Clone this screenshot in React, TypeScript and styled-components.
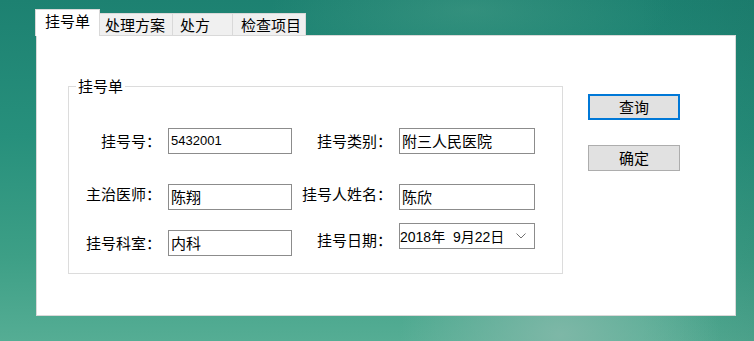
import styled, { createGlobalStyle } from "styled-components";

const GlobalStyle = createGlobalStyle`
  html, body {
    margin: 0;
    padding: 0;
  }
  body {
    font-family: "Noto Sans CJK SC", "Liberation Sans", sans-serif;
    color: #000;
    overflow: hidden;
  }
`;

const Desktop = styled.div`
  width: 754px;
  height: 341px;
  box-sizing: border-box;
  padding: 9px 0 0 35px;
  background:
    radial-gradient(ellipse 160px 110px at 560px 335px, rgba(128, 184, 168, 0.95), rgba(128, 184, 168, 0)),
    radial-gradient(ellipse 200px 60px at 470px 10px, rgba(100, 175, 150, 0.3), transparent),
    linear-gradient(90deg, rgba(0, 0, 0, 0) 85%, rgba(20, 90, 80, 0.15) 100%),
    linear-gradient(180deg, #1d8171 0%, #27907c 40%, #3d9f86 75%, #55ad94 100%);
`;

const TabStrip = styled.div`
  display: flex;
  align-items: flex-end;
  height: 27px;
  margin-bottom: -1px;
  position: relative;
  z-index: 1;
`;

const Tab = styled.div<{ $active?: boolean; $w: number; $pad: number }>`
  box-sizing: border-box;
  width: ${(p) => p.$w}px;
  height: ${(p) => (p.$active ? 27 : 23)}px;
  margin-left: ${(p) => (p.$active ? 0 : -1)}px;
  padding-left: ${(p) => p.$pad}px;
  border: 1px solid #d9d9d9;
  border-bottom: ${(p) => (p.$active ? "none" : "1px solid #d9d9d9")};
  background: ${(p) => (p.$active ? "#fff" : "#f0f0f0")};
  font-size: 15px;
  line-height: 22px;
  white-space: nowrap;
  &:first-child {
    margin-left: 0;
  }
`;

const Page = styled.div`
  box-sizing: border-box;
  margin-left: 1px;
  width: 700px;
  height: 281px;
  border: 1px solid #d9d9d9;
  background: #fff;
  display: flex;
  align-items: flex-start;
  gap: 25px;
  padding: 50px 0 0 31px;
`;

const Group = styled.div`
  position: relative;
  box-sizing: border-box;
  width: 495px;
  height: 188px;
  border: 1px solid #dcdcdc;
  padding-top: 41px;
`;

const Legend = styled.span`
  position: absolute;
  left: 7px;
  top: -11px;
  padding: 0 2px;
  background: #fff;
  font-size: 15px;
  line-height: 20px;
`;

const FormRow = styled.div<{ $h: number; $top: number }>`
  display: grid;
  grid-template-columns: 92px 124px 93px 136px;
  column-gap: 7px;
  height: ${(p) => p.$h}px;
  margin-top: ${(p) => p.$top}px;
  align-items: center;
`;

const Label = styled.div<{ $align?: "start" | "center" | "end" }>`
  justify-self: end;
  align-self: ${(p) => p.$align ?? "center"};
  font-size: 15px;
  line-height: ${(p) => (p.$align === "end" ? 26 : 20)}px;
  white-space: nowrap;
`;

const Field = styled.input<{ $small?: boolean; $align?: "start" | "center" | "end" }>`
  box-sizing: border-box;
  width: 100%;
  height: 26px;
  margin: 0;
  align-self: ${(p) => p.$align ?? "center"};
  border: 1px solid #8c8c8c;
  padding: 0 2px 1px;
  outline: none;
  background: #fff;
  color: #000;
  font-family: "Liberation Sans", "Noto Sans CJK SC", sans-serif;
  font-size: ${(p) => (p.$small ? 13 : 15)}px;
`;

const DateBox = styled.div`
  box-sizing: border-box;
  height: 26px;
  align-self: start;
  border: 1px solid #8c8c8c;
  display: flex;
  align-items: center;
  justify-content: space-between;
  padding: 0 8px 1px 0;
  font-family: "Liberation Sans", "Noto Sans CJK SC", sans-serif;
  font-size: 14px;
  white-space: pre;
`;

const ButtonColumn = styled.div`
  display: flex;
  flex-direction: column;
  gap: 25px;
  margin-top: 8px;
`;

const Button = styled.button<{ $primary?: boolean }>`
  box-sizing: border-box;
  width: 92px;
  height: 26px;
  margin: 0;
  padding: 0;
  background: #e1e1e1;
  border: ${(p) => (p.$primary ? "2px solid #0078d7" : "1px solid #adadad")};
  font-family: "Noto Sans CJK SC", sans-serif;
  font-size: 15px;
  color: #000;
  line-height: 20px;
`;

const tabs = [
  { label: "挂号单", w: 65, pad: 9, active: true },
  { label: "处理方案", w: 74, pad: 5 },
  { label: "处方", w: 61, pad: 7 },
  { label: "检查项目", w: 74, pad: 8 },
];

function Chevron() {
  return (
    <svg width="10" height="6" viewBox="0 0 10 6">
      <path d="M0.5 0.5 L5 5 L9.5 0.5" fill="none" stroke="#707070" strokeWidth="1" />
    </svg>
  );
}

export default function App() {
  return (
    <>
      <GlobalStyle />
      <Desktop>
        <TabStrip>
          {tabs.map((t) => (
            <Tab key={t.label} $active={t.active} $w={t.w} $pad={t.pad}>
              {t.label}
            </Tab>
          ))}
        </TabStrip>
        <Page>
          <Group>
            <Legend>挂号单</Legend>
            <FormRow $h={26} $top={0}>
              <Label>挂号号：</Label>
              <Field $small readOnly value="5432001" />
              <Label>挂号类别：</Label>
              <Field readOnly value="附三人民医院" />
            </FormRow>
            <FormRow $h={26} $top={30}>
              <Label $align="start">主治医师：</Label>
              <Field readOnly value="陈翔" />
              <Label $align="start">挂号人姓名：</Label>
              <Field readOnly value="陈欣" />
            </FormRow>
            <FormRow $h={33} $top={13}>
              <Label $align="end">挂号科室：</Label>
              <Field $align="end" readOnly value="内科" />
              <Label>挂号日期：</Label>
              <DateBox>
                <span>2018年  9月22日</span>
                <Chevron />
              </DateBox>
            </FormRow>
          </Group>
          <ButtonColumn>
            <Button $primary>查询</Button>
            <Button>确定</Button>
          </ButtonColumn>
        </Page>
      </Desktop>
    </>
  );
}
